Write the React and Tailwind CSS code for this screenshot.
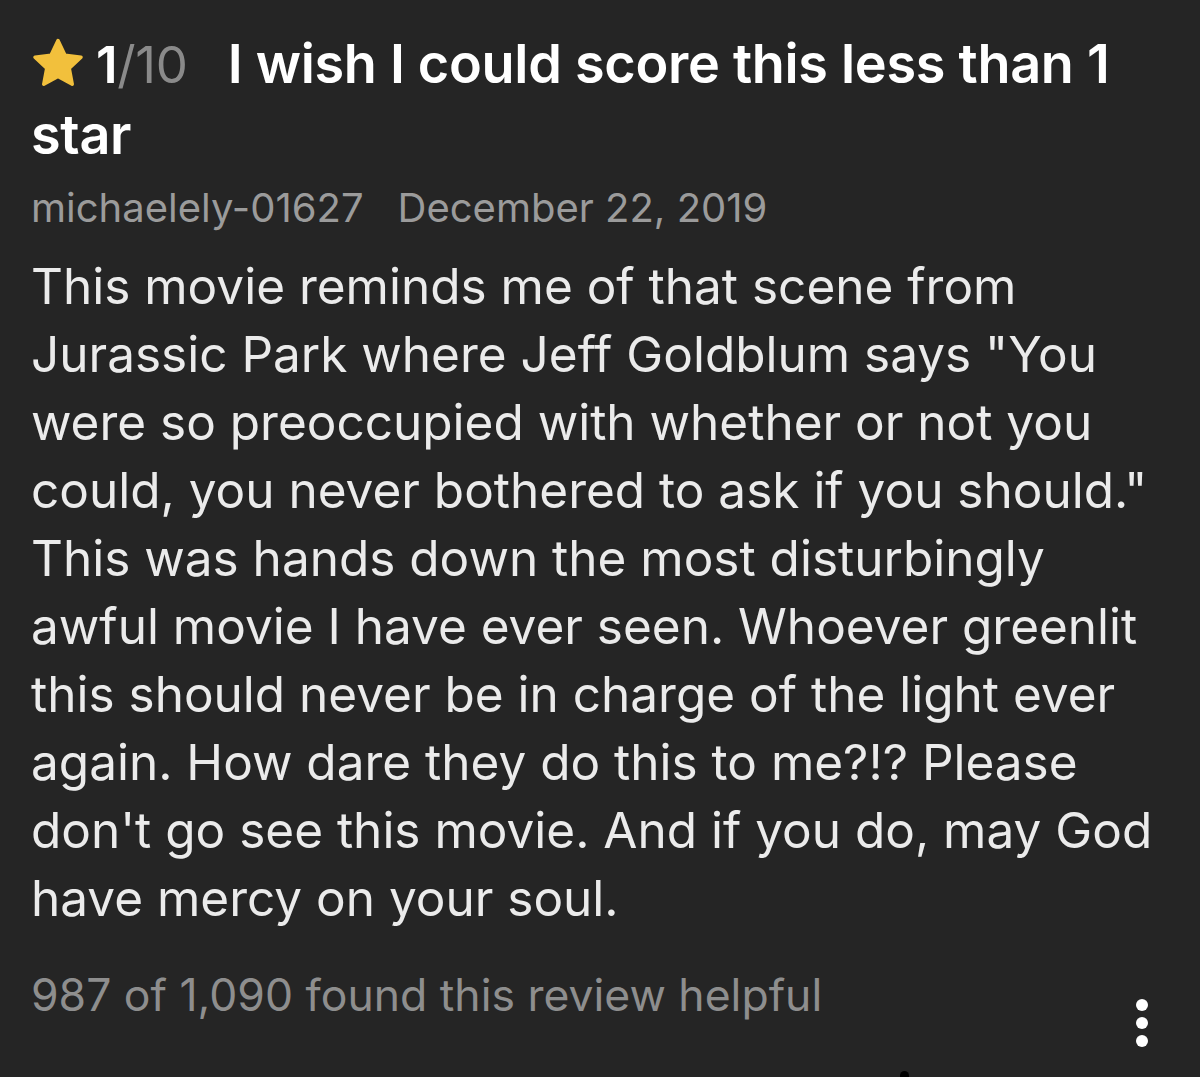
import React from "react";

const bodyLines = [
  "This movie reminds me of that scene from",
  'Jurassic Park where Jeff Goldblum says "You',
  "were so preoccupied with whether or not you",
  'could, you never bothered to ask if you should."',
  "This was hands down the most disturbingly",
  "awful movie I have ever seen. Whoever greenlit",
  "this should never be in charge of the light ever",
  "again. How dare they do this to me?!? Please",
  "don't go see this movie. And if you do, may God",
  "have mercy on your soul.",
];

export default function App() {
  const font = { fontFamily: "Inter, 'Noto Sans', sans-serif" };
  return (
    <div className="w-[1200px] h-[1077px] bg-[#252525] overflow-hidden relative" style={font}>
      <div className="pl-[31px] pr-[20px] pt-[29px]">
        <h1 className="text-[54px] leading-[70px] font-semibold text-white tracking-[-0.3px]">
          <span className="inline-flex items-baseline mr-[40px]">
            <svg viewBox="0 0 24 24" className="w-[60px] h-[60px] self-center ml-[-3px] mr-[8px] translate-y-[-1px]">
              <path
                d="M12 2.6l2.8 5.9 6.4.8-4.7 4.4 1.2 6.4L12 17l-5.7 3.1 1.2-6.4L2.8 9.3l6.4-.8z"
                fill="#F2C03C"
                stroke="#F2C03C"
                strokeWidth="1.4"
                strokeLinejoin="round"
              />
            </svg>
            <span className="text-[51px] font-semibold">1</span>
            <span className="text-[51px] font-normal text-[#8a8a8a]">/10</span>
          </span>
          I wish I could score this less than 1
          <br />
          star
        </h1>
        <div className="mt-[14px] text-[40px] leading-[48px] text-[#9b9b9b] flex gap-[34px] whitespace-nowrap">
          <span>michaelely-01627</span>
          <span>December 22, 2019</span>
        </div>
        <p className="mt-[20px] text-[49.5px] leading-[68px] text-[#ebebeb] whitespace-nowrap">
          {bodyLines.map((l, i) => (
            <span key={i} className="block">
              {l}
            </span>
          ))}
        </p>
        <div className="mt-[35px] text-[44.5px] leading-[56px] text-[#8e8e8e] whitespace-nowrap">
          987 of 1,090 found this review helpful
        </div>
      </div>
      <div className="absolute left-[1136px] top-[999px] flex flex-col gap-[6px]">
        <div className="w-[12px] h-[12px] rounded-full bg-white" />
        <div className="w-[12px] h-[12px] rounded-full bg-white" />
        <div className="w-[12px] h-[12px] rounded-full bg-white" />
      </div>
      <div className="absolute left-[900px] top-[1071px] w-[9px] h-[12px] rounded-t-full bg-black" />
    </div>
  );
}
